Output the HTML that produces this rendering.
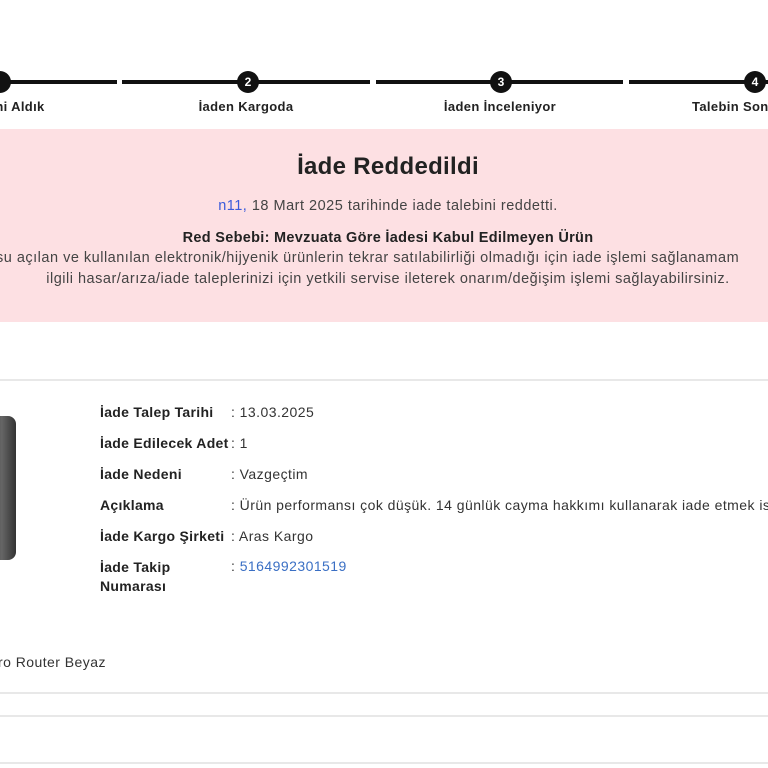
<!DOCTYPE html><html><head><meta charset="utf-8"><style>
body{margin:0;width:768px;height:768px;overflow:hidden;background:#fff;font-family:"Liberation Sans",sans-serif;color:#333;position:relative}
.a{position:absolute;white-space:nowrap}
.seg{position:absolute;top:80px;height:4px;background:#111}
.c{position:absolute;top:71px;width:22px;height:22px;border-radius:50%;background:#111;color:#fff;font-size:12px;font-weight:bold;text-align:center;line-height:22px}
.lb{position:absolute;top:99px;font-size:13px;font-weight:bold;color:#222;transform:translateX(-50%);letter-spacing:.35px;white-space:nowrap}
.pink{position:absolute;left:0;top:129px;width:768px;height:193px;background:#fde0e3}
.ctr{position:absolute;left:-200px;width:1176px;text-align:center;white-space:nowrap}
.p{font-size:14.5px;letter-spacing:.5px;color:#444}
.hr{position:absolute;left:0;width:768px;height:2px;background:#e8e8e8}
.k{position:absolute;left:100px;font-size:14px;font-weight:bold;color:#222;letter-spacing:.3px}
.v{position:absolute;left:231px;font-size:14px;color:#333;white-space:nowrap;letter-spacing:.45px}
</style></head><body>
<div class="seg" style="left:0;width:117px"></div>
<div class="seg" style="left:122px;width:248px"></div>
<div class="seg" style="left:376px;width:247px"></div>
<div class="seg" style="left:629px;width:139px"></div>
<div class="c" style="left:-11px"></div>
<div class="c" style="left:237px">2</div>
<div class="c" style="left:490px">3</div>
<div class="c" style="left:744px">4</div>
<div class="lb" style="left:18px">ini Aldık</div>
<div class="lb" style="left:246px">İaden Kargoda</div>
<div class="lb" style="left:500px">İaden İnceleniyor</div>
<div class="lb" style="transform:none;left:692px">Talebin Son</div>
<div class="pink"></div>
<div class="ctr" style="top:153px;font-size:24px;font-weight:bold;color:#222;letter-spacing:.3px">İade Reddedildi</div>
<div class="ctr p" style="top:198px"><span style="color:#3b5bdb">n11,</span> 18 Mart 2025 tarihinde iade talebini reddetti.</div>
<div class="ctr p" style="top:230px;font-weight:bold;color:#222;letter-spacing:.3px">Red Sebebi: Mevzuata Göre İadesi Kabul Edilmeyen Ürün</div>
<div class="a p" style="left:-4px;top:250px">su açılan ve kullanılan elektronik/hijyenik ürünlerin tekrar satılabilirliği olmadığı için iade işlemi sağlanamam</div>
<div class="ctr p" style="top:271px">ilgili hasar/arıza/iade taleplerinizi için yetkili servise ileterek onarım/değişim işlemi sağlayabilirsiniz.</div>
<div class="hr" style="top:379px"></div>
<div class="a" style="left:-20px;top:416px;width:36px;height:144px;border-radius:8px;background:linear-gradient(90deg,#222,#666 60%,#333)"></div>
<div class="k" style="top:404px">İade Talep Tarihi</div><div class="v" style="top:404px">: 13.03.2025</div>
<div class="k" style="top:435px">İade Edilecek Adet</div><div class="v" style="top:435px">: 1</div>
<div class="k" style="top:466px">İade Nedeni</div><div class="v" style="top:466px">: Vazgeçtim</div>
<div class="k" style="top:497px">Açıklama</div><div class="v" style="top:497px">: Ürün performansı çok düşük. 14 günlük cayma hakkımı kullanarak iade etmek is</div>
<div class="k" style="top:528px">İade Kargo Şirketi</div><div class="v" style="top:528px">: Aras Kargo</div>
<div class="k" style="top:558px;line-height:19px">İade Takip<br>Numarası</div><div class="v" style="top:558px">: <span style="color:#3a6fc4">5164992301519</span></div>
<div class="a" style="left:-2px;top:654px;font-size:14px;color:#333;letter-spacing:.45px">ro Router Beyaz</div>
<div class="hr" style="top:692px"></div>
<div class="hr" style="top:715px"></div>
<div class="hr" style="top:762px"></div>
</body></html>
